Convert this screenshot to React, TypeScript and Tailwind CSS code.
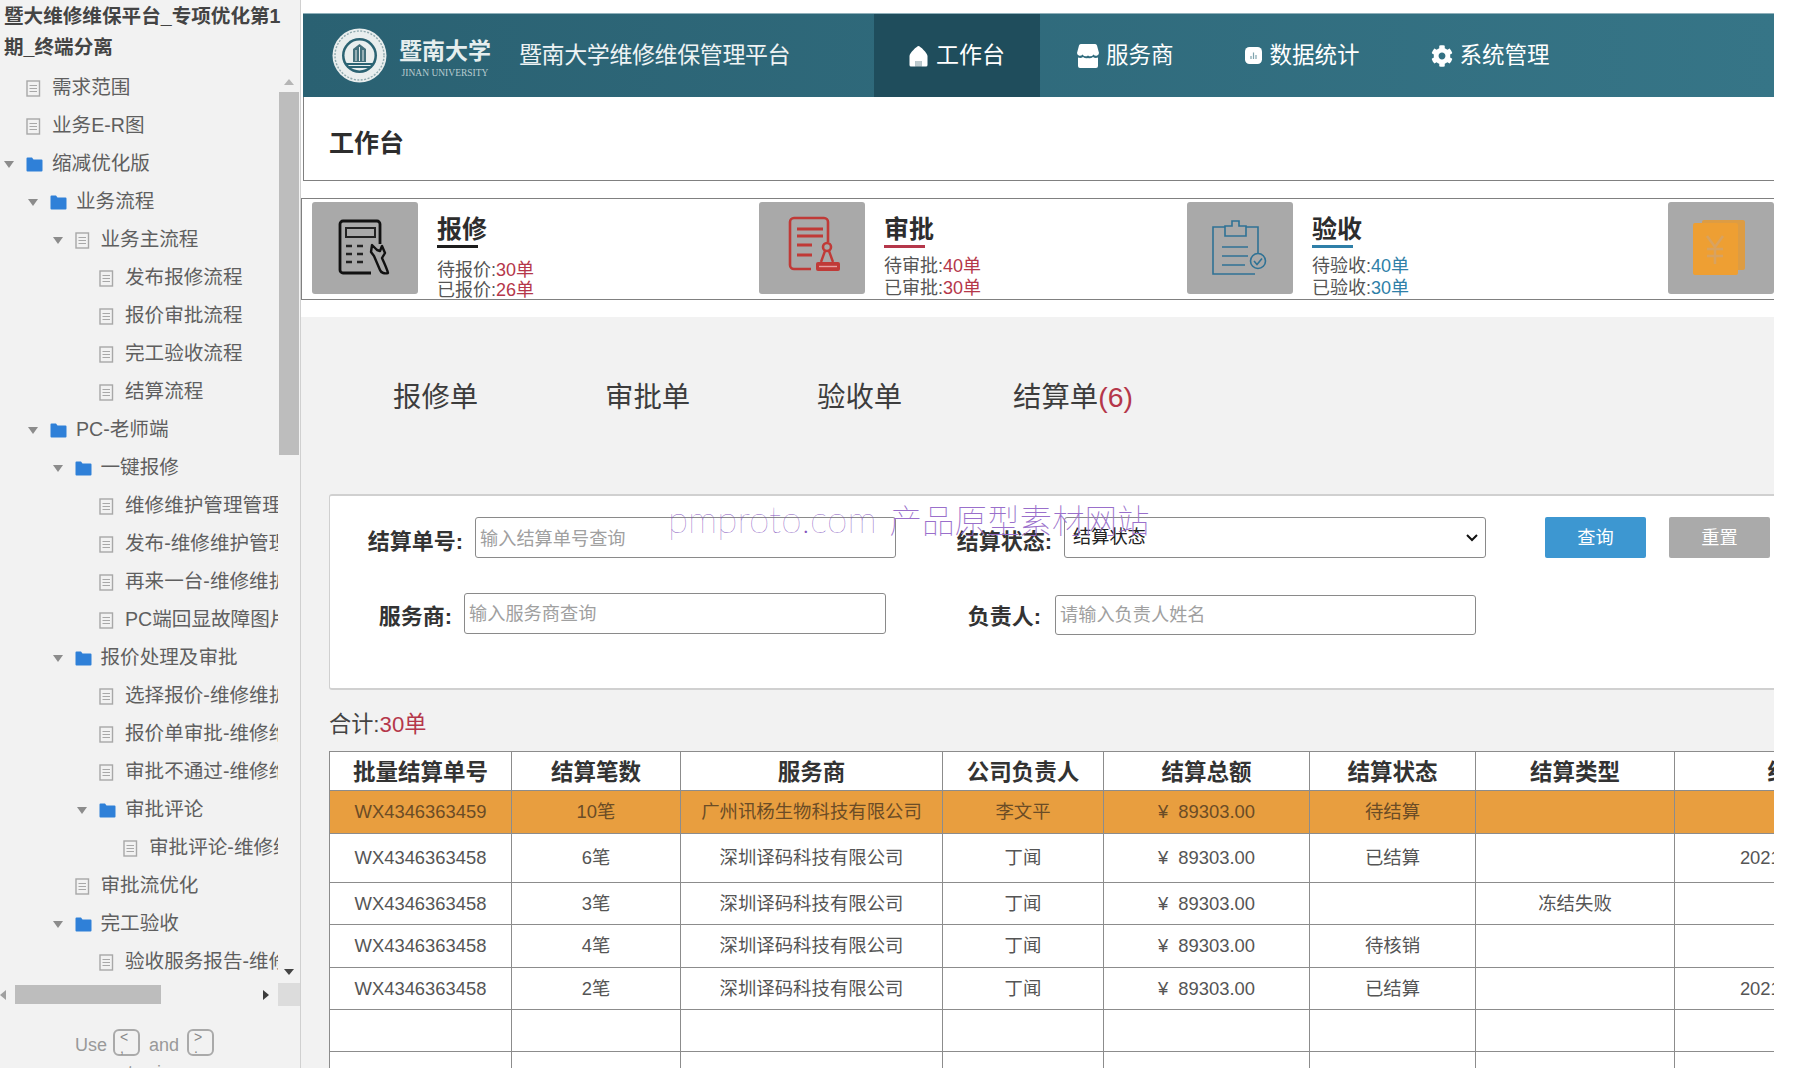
import React from "react";
import { FaCog } from "react-icons/fa";

type TreeRow = { level: number; kind: "doc" | "folder"; caret?: boolean; text: string };

const treeRows: TreeRow[] = [
  { level: 0, kind: "doc", text: "需求范围" },
  { level: 0, kind: "doc", text: "业务E-R图" },
  { level: 0, kind: "folder", caret: true, text: "缩减优化版" },
  { level: 1, kind: "folder", caret: true, text: "业务流程" },
  { level: 2, kind: "doc", caret: true, text: "业务主流程" },
  { level: 3, kind: "doc", text: "发布报修流程" },
  { level: 3, kind: "doc", text: "报价审批流程" },
  { level: 3, kind: "doc", text: "完工验收流程" },
  { level: 3, kind: "doc", text: "结算流程" },
  { level: 1, kind: "folder", caret: true, text: "PC-老师端" },
  { level: 2, kind: "folder", caret: true, text: "一键报修" },
  { level: 3, kind: "doc", text: "维修维护管理管理员" },
  { level: 3, kind: "doc", text: "发布-维修维护管理员" },
  { level: 3, kind: "doc", text: "再来一台-维修维护管理员" },
  { level: 3, kind: "doc", text: "PC端回显故障图片" },
  { level: 2, kind: "folder", caret: true, text: "报价处理及审批" },
  { level: 3, kind: "doc", text: "选择报价-维修维护管理员" },
  { level: 3, kind: "doc", text: "报价单审批-维修维护管理员" },
  { level: 3, kind: "doc", text: "审批不通过-维修维护管理员" },
  { level: 3, kind: "folder", caret: true, text: "审批评论" },
  { level: 4, kind: "doc", text: "审批评论-维修维护管理员" },
  { level: 2, kind: "doc", text: "审批流优化" },
  { level: 2, kind: "folder", caret: true, text: "完工验收" },
  { level: 3, kind: "doc", text: "验收服务报告-维修维护" },
];

const indent = ["pl-[6px]", "pl-[30px]", "pl-[54.5px]", "pl-[79px]", "pl-[103px]"];

function DocIcon() {
  return (
    <svg width="15" height="17" viewBox="0 0 15 17">
      <rect x="1" y="1" width="12.5" height="15" fill="none" stroke="#a8a8a8" strokeWidth="1.4" />
      <path d="M3.5 5.5h7.5M3.5 8.5h7.5M3.5 11.5h7.5" stroke="#a8a8a8" strokeWidth="1.2" />
    </svg>
  );
}

function FolderIcon() {
  return (
    <svg width="17" height="15" viewBox="0 0 17 15">
      <path d="M0.5 1.5a1 1 0 0 1 1-1h4.5l1.5 2h8a1 1 0 0 1 1 1v10a1 1 0 0 1-1 1h-14a1 1 0 0 1-1-1z" fill="#2f80d8" />
    </svg>
  );
}

function Caret() {
  return (
    <svg width="10" height="7" viewBox="0 0 10 7" className="-ml-[2px]">
      <path d="M0 0h10L5 7z" fill="#8c8c8c" />
    </svg>
  );
}

function Sidebar() {
  return (
    <aside className="w-[301px] h-full shrink-0 bg-[#f2f2f2] border-r border-[#d0d0d0] flex flex-col overflow-hidden">
      <div className="pl-[4px] pt-[1px] pr-[8px] mb-[7px] text-[19.6px] leading-[30.5px] font-bold text-[#444]">
        暨大维修维保平台_专项优化第1期_终端分离
      </div>
      <div className="flex h-[910px] shrink-0">
        <div className="w-[278px] shrink-0 overflow-hidden">
          {treeRows.map((row, i) => (
            <div key={i} className={`flex items-center h-[38px] whitespace-nowrap text-[19.6px] text-[#5f5f5f] ${indent[row.level]}`}>
              <span className="w-[20px] shrink-0 flex items-center">{row.caret ? <Caret /> : null}</span>
              <span className="w-[26px] shrink-0 flex items-center">{row.kind === "doc" ? <DocIcon /> : <FolderIcon />}</span>
              <span>{row.text}</span>
            </div>
          ))}
        </div>
        <div className="w-[20px] ml-[1px] shrink-0 flex flex-col">
          <div className="h-[23px] flex items-end justify-center pb-[7px]">
            <svg width="10" height="6" viewBox="0 0 10 6"><path d="M5 0l5 6H0z" fill="#b5b5b5" /></svg>
          </div>
          <div className="h-[363px] bg-[#bdbdbd]" />
          <div className="flex-1 flex items-end justify-center pb-[4px]">
            <svg width="10" height="6" viewBox="0 0 10 6"><path d="M0 0h10L5 6z" fill="#444" /></svg>
          </div>
        </div>
      </div>
      <div className="mt-[4px] h-[23px] shrink-0 flex items-center">
        <svg width="6" height="10" viewBox="0 0 6 10"><path d="M6 0v10L0 5z" fill="#a0a0a0" /></svg>
        <div className="ml-[9px] w-[146px] h-[19px] bg-[#bdbdbd]" />
        <svg width="6" height="10" viewBox="0 0 6 10" className="ml-[102px]"><path d="M0 0v10l6-5z" fill="#3c3c3c" /></svg>
        <div className="ml-[9px] w-[22px] h-[23px] bg-[#dcdcdc]" />
      </div>
      <div className="mt-[22px] h-[28px] shrink-0 flex items-center pl-[75px] text-[18px] text-[#999]">
        <span className="pt-[6px]">Use</span>
        <span className="ml-[6px] w-[27px] h-[27px] border-2 border-[#aaa] rounded-[6px] flex flex-col pl-[5px] pt-[1px] text-[14px] leading-[11px] text-[#888]">
          <span>&lt;</span>
          <span>,</span>
        </span>
        <span className="ml-[9px] pt-[6px]">and</span>
        <span className="ml-[8px] w-[27px] h-[27px] border-2 border-[#aaa] rounded-[6px] flex flex-col pl-[5px] pt-[1px] text-[14px] leading-[11px] text-[#888]">
          <span>&gt;</span>
          <span>.</span>
        </span>
      </div>
      <div className="pl-[128px] mt-[4px] text-[18px] leading-[24px] text-[#999]">to view</div>
    </aside>
  );
}

function Logo() {
  return (
    <svg width="55" height="55" viewBox="0 0 55 55" className="shrink-0">
      <circle cx="27.5" cy="27.5" r="27" fill="#e9eeee" />
      <circle cx="27.5" cy="27.5" r="24.5" fill="none" stroke="#8fa9ae" strokeWidth="1.4" strokeDasharray="2 1.5" />
      <circle cx="27.5" cy="27.5" r="17.5" fill="#2b6373" />
      <circle cx="27.5" cy="27.5" r="15" fill="#e9eeee" />
      <path d="M21 34V21l6.500-5 6.500 5v13z" fill="#44707c" />
      <path d="M14 36h27M17 39h21" stroke="#2b6373" strokeWidth="2.2" />
      <path d="M24 33V22M27.500 33V19M31 33V22" stroke="#e9eeee" strokeWidth="1" />
    </svg>
  );
}

function HomeIcon() {
  return (
    <svg width="19" height="22" viewBox="0 0 19 22" className="shrink-0">
      <path d="M9.500 1C11 1 18.500 8 18.500 11V20a1.500 1.500 0 0 1-1.500 1.500H12.500V16h-6v5.500H2A1.500 1.500 0 0 1 .5 20V11C.5 8 8 1 9.500 1z" fill="#fff" />
      <rect x="6.500" y="16" width="6" height="5.500" fill="#fff" opacity="0.7" />
    </svg>
  );
}

function StoreIcon() {
  return (
    <svg width="22" height="24" viewBox="0 0 22 24" className="shrink-0">
      <path d="M4 0h14a2 2 0 0 1 2 1.600L22 9a3 3 0 0 1-5.500 1.400A4 4 0 0 1 11 11.500a4 4 0 0 1-5.500-1.100A3 3 0 0 1 0 9l2-7.400A2 2 0 0 1 4 0z" fill="#fff" />
      <path d="M1 13.500a5 5 0 0 0 5-.5 6 6 0 0 0 5 1 6 6 0 0 0 5-1 5 5 0 0 0 5 .5V22a2 2 0 0 1-2 2H3a2 2 0 0 1-2-2z" fill="#fff" />
    </svg>
  );
}

function StatsIcon() {
  return (
    <svg width="17" height="17" viewBox="0 0 17 17" className="shrink-0">
      <rect width="17" height="17" rx="4.500" fill="#fff" />
      <path d="M6 12V9M8.500 12V5.500M11 12V8" stroke="#7fa4ae" strokeWidth="1.200" />
    </svg>
  );
}

function CalcIcon() {
  return (
    <svg viewBox="0 0 106 92" className="w-full h-full">
      <path d="M68 42V22a3 3 0 0 0-3-3H31a3 3 0 0 0-3 3v46a3 3 0 0 0 3 3h28" fill="none" stroke="#111" strokeWidth="2.800" />
      <rect x="34" y="26" width="29" height="9" fill="none" stroke="#222" strokeWidth="2" />
      <path d="M34 44h6M45 44h6M34 52h6M45 52h6M34 60h6M45 60h6" stroke="#222" strokeWidth="2.600" />
      <path d="M60 43l-1 7 3 4 6 14c1 3 5 4 8 3-1-4-3-8-6-15l3-5-3-7-2 5-3-1z" fill="#a9a9a9" stroke="#111" strokeWidth="2.400" strokeLinejoin="round" />
    </svg>
  );
}

function StampDocIcon() {
  return (
    <svg viewBox="0 0 106 92" className="w-full h-full">
      <path d="M52 67H35a4 4 0 0 1-4-4V20a4 4 0 0 1 4-4h30a4 4 0 0 1 4 4v20" fill="none" stroke="#c03a37" strokeWidth="2.600" />
      <path d="M38 27h26M38 34h26M38 43h15M38 53h15" stroke="#c03a37" strokeWidth="3" />
      <circle cx="68" cy="45" r="4" fill="none" stroke="#c03a37" strokeWidth="2.600" />
      <path d="M66 49l-4 11M70 49l4 11" stroke="#c03a37" strokeWidth="2.400" />
      <rect x="57" y="60" width="24" height="9" rx="2" fill="#c03a37" />
      <path d="M60 64.500h18" stroke="#e8a0a0" strokeWidth="1.400" />
    </svg>
  );
}

function ClipIcon() {
  return (
    <svg viewBox="0 0 106 92" className="w-full h-full">
      <path d="M71 52V25H59M38 25H26v47h42" fill="none" stroke="#2f7295" strokeWidth="1.600" />
      <path d="M38 34V24h7v-5h7v5h7v10z" fill="none" stroke="#2f7295" strokeWidth="1.600" />
      <path d="M35 45h26M35 54h26M35 63h23" stroke="#2f7295" strokeWidth="1.600" />
      <circle cx="71" cy="59" r="7.500" fill="none" stroke="#2f7295" strokeWidth="1.600" />
      <path d="M67 59l3 3.500 5-6" fill="none" stroke="#2f7295" strokeWidth="1.600" />
    </svg>
  );
}

function YenIcon() {
  return (
    <svg viewBox="0 0 106 92" className="w-full h-full">
      <rect x="34" y="18" width="43" height="50" rx="2" fill="#dd9c43" />
      <rect x="25" y="21" width="45" height="52" rx="2" fill="#ee9f33" />
      <path d="M39 34l8 11 8-11M47 45v17M39 47h16M39 54h16" fill="none" stroke="#d8a260" strokeWidth="2.500" />
    </svg>
  );
}

function Card({
  w,
  title,
  icon,
  bar,
  accent,
  l1,
  v1,
  l2,
  v2,
  lines,
}: {
  w: string;
  title: string;
  icon: React.ReactNode;
  bar: string;
  accent: string;
  l1: string;
  v1: string;
  l2: string;
  v2: string;
  lines: string;
}) {
  return (
    <div className={`flex shrink-0 ${w}`}>
      <div className="w-[106px] h-[92px] shrink-0 bg-[#a9a9a9] rounded-[3px]">{icon}</div>
      <div className="ml-[19px] pt-[12px]">
        <div className="text-[25px] leading-[30px] font-bold text-[#2d2d2d]">{title}</div>
        <div className={`w-[41px] h-[3px] mt-[1px] ${bar}`} />
        <div className={`text-[18px] text-[#555] ${lines}`}>
          <div>
            {l1}:<span className={accent}>{v1}</span>
          </div>
          <div>
            {l2}:<span className={accent}>{v2}</span>
          </div>
        </div>
      </div>
    </div>
  );
}

const cols = ["w-[182px]", "w-[169px]", "w-[262px]", "w-[161px]", "w-[206px]", "w-[166px]", "w-[199px]", "w-[276px]"];
const heads = ["批量结算单号", "结算笔数", "服务商", "公司负责人", "结算总额", "结算状态", "结算类型", "结算时间"];
const yen = "¥\u00a0\u00a089303.00";
const rows = [
  { h: "h-[43px]", hi: true, c: ["WX4346363459", "10笔", "广州讯杨生物科技有限公司", "李文平", yen, "待结算", "", ""] },
  { h: "h-[49px]", hi: false, c: ["WX4346363458", "6笔", "深圳译码科技有限公司", "丁闻", yen, "已结算", "", "2021-12-22 10:30"] },
  { h: "h-[42px]", hi: false, c: ["WX4346363458", "3笔", "深圳译码科技有限公司", "丁闻", yen, "", "冻结失败", ""] },
  { h: "h-[43px]", hi: false, c: ["WX4346363458", "4笔", "深圳译码科技有限公司", "丁闻", yen, "待核销", "", ""] },
  { h: "h-[42px]", hi: false, c: ["WX4346363458", "2笔", "深圳译码科技有限公司", "丁闻", yen, "已结算", "", "2021-12-22 10:30"] },
  { h: "h-[42px]", hi: false, c: ["", "", "", "", "", "", "", ""] },
  { h: "h-[42px]", hi: false, c: ["", "", "", "", "", "", "", ""] },
];

export default function App() {
  return (
    <div className="w-[1808px] h-[1068px] flex overflow-hidden bg-white relative font-['Liberation_Sans','Noto_Sans_CJK_SC',sans-serif]">
      <Sidebar />
      <main className="w-[1473px] h-full shrink-0 overflow-hidden flex flex-col pt-[13px]">
        <header className="ml-[2px] h-[84px] shrink-0 flex items-center bg-linear-to-r from-[#2a6172] to-[#367587] text-white border-t border-[#8fb0ba]">
          <div className="ml-[29px]">
            <Logo />
          </div>
          <div className="ml-[12px] w-[92px] pt-[6px] flex flex-col items-center shrink-0">
            <div className="text-[23px] leading-[26px] font-bold text-[#e6eeee] whitespace-nowrap">暨南大学</div>
            <div className="text-[9.5px] leading-[12px] mt-[3px] text-[#b9ccd0] font-['Liberation_Serif',serif] whitespace-nowrap">JINAN UNIVERSITY</div>
          </div>
          <div className="ml-[28px] w-[271px] shrink-0 text-[23px] tracking-[-0.4px] text-[#eef3f4] whitespace-nowrap">暨南大学维修维保管理平台</div>
          <div className="ml-[84px] w-[166px] h-full shrink-0 flex items-center justify-center gap-[8px] bg-[#1f4d5c] text-[23px]">
            <HomeIcon />
            <span>工作台</span>
          </div>
          <div className="ml-[37px] shrink-0 flex items-center gap-[7px] text-[22.5px]">
            <StoreIcon />
            <span>服务商</span>
          </div>
          <div className="ml-[71px] shrink-0 flex items-center gap-[8px] text-[22.5px]">
            <StatsIcon />
            <span>数据统计</span>
          </div>
          <div className="ml-[71px] shrink-0 flex items-center gap-[7px] text-[22.5px]">
            <FaCog className="w-[22px] h-[22px]" />
            <span>系统管理</span>
          </div>
        </header>

        <div className="ml-[2px] h-[84px] shrink-0 flex items-center pl-[25px] pt-[10px] border-l border-b border-[#808080]">
          <h1 className="text-[25px] font-bold text-[#2d2d2d]">工作台</h1>
        </div>

        <section className="mt-[17px] h-[102px] shrink-0 flex pl-[10px] pt-[3px] border-t border-b border-l border-[#808080] overflow-hidden">
          <Card w="w-[447px]" title="报修" icon={<CalcIcon />} bar="bg-[#1d1d1d]" accent="text-[#b5374a]" l1="待报价" v1="30单" l2="已报价" v2="26单" lines="mt-[12px] leading-[20px]" />
          <Card w="w-[428px]" title="审批" icon={<StampDocIcon />} bar="bg-[#b5374a]" accent="text-[#b5374a]" l1="待审批" v1="40单" l2="已审批" v2="30单" lines="mt-[7px] leading-[22px]" />
          <Card w="w-[481px]" title="验收" icon={<ClipIcon />} bar="bg-[#2f7fa8]" accent="text-[#2f7fa8]" l1="待验收" v1="40单" l2="已验收" v2="30单" lines="mt-[7px] leading-[22px]" />
          <div className="w-[106px] h-[92px] shrink-0 bg-[#a9a9a9] rounded-[3px]">
            <YenIcon />
          </div>
        </section>

        <div className="mt-[17px] flex-1 bg-[#f2f2f2] min-h-0 overflow-hidden">
          <nav className="pt-[60px] pl-[92px] flex text-[28.4px] leading-[40px] text-[#3d3d3d]">
            <div className="w-[212px] shrink-0">报修单</div>
            <div className="w-[212px] shrink-0">审批单</div>
            <div className="w-[196px] shrink-0">验收单</div>
            <div className="shrink-0">
              结算单<span className="text-[#b5374a]">(6)</span>
            </div>
          </nav>

          <div className="mt-[77px] ml-[28px] h-[196px] bg-white border-t-2 border-b-2 border-l border-[#d0d0d0] rounded-l-[3px] pt-[21px]">
            <div className="flex items-start">
              <label className="w-[133px] mt-[5px] text-right text-[22px] leading-[40px] font-bold text-[#333]">结算单号:</label>
              <input placeholder="输入结算单号查询" className="ml-[12px] w-[421px] h-[41px] pl-[4px] pt-[3px] border border-[#8a8a8a] rounded-[3px] text-[18.2px] bg-white placeholder:text-[#a0a0a0]" />
              <label className="w-[156px] mt-[5px] text-right text-[22px] leading-[40px] font-bold text-[#333]">结算状态:</label>
              <div className="relative ml-[12px] w-[422px] h-[41px]">
                <select defaultValue="结算状态" className="appearance-none w-full h-full pl-[8px] border border-[#8a8a8a] rounded-[3px] text-[18.2px] text-[#222] bg-white">
                  <option>结算状态</option>
                </select>
                <svg width="12" height="8" viewBox="0 0 12 8" className="absolute right-[8px] top-[17px]">
                  <path d="M1 1l5 5 5-5" fill="none" stroke="#111" strokeWidth="2" />
                </svg>
              </div>
              <button className="ml-[59px] w-[101px] h-[41px] pt-[3px] rounded-[2px] bg-[#3d97d1] text-white text-[18.2px]">查询</button>
              <button className="ml-[23px] w-[101px] h-[41px] pt-[3px] rounded-[2px] bg-[#aaaaaa] text-white text-[18.2px]">重置</button>
            </div>
            <div className="flex items-start mt-[31px]">
              <label className="w-[122px] mt-[4px] text-right text-[22px] leading-[40px] font-bold text-[#333]">服务商:</label>
              <input placeholder="输入服务商查询" className="ml-[12px] w-[422px] h-[41px] pl-[4px] pt-[2px] border border-[#8a8a8a] rounded-[3px] text-[18.2px] bg-white placeholder:text-[#a0a0a0]" />
              <label className="w-[155px] mt-[4px] text-right text-[22px] leading-[40px] font-bold text-[#333]">负责人:</label>
              <input placeholder="请输入负责人姓名" className="ml-[14px] mt-[2px] w-[421px] h-[40px] pl-[4px] pt-[1px] border border-[#8a8a8a] rounded-[3px] text-[18.2px] bg-white placeholder:text-[#a0a0a0]" />
            </div>
          </div>

          <div className="mt-[20px] ml-[28px] text-[22.2px] leading-[30px] text-[#444]">
            合计:<span className="text-[#b5374a]">30单</span>
          </div>

          <table className="mt-[11px] ml-[28px] w-[1621px] max-w-none table-fixed border-collapse bg-white text-center text-[18.4px] text-[#555]">
            <colgroup>
              {cols.map((c, i) => (
                <col key={i} className={c} />
              ))}
            </colgroup>
            <thead>
              <tr className="h-[39px]">
                {heads.map((h) => (
                  <th key={h} className="border border-[#8c8c8c] p-0 pt-[3px] leading-[30px] text-[22.5px] font-bold text-[#333]">
                    {h}
                  </th>
                ))}
              </tr>
            </thead>
            <tbody>
              {rows.map((r, i) => (
                <tr key={i} className={`${r.h} ${r.hi ? "bg-[#e89e3f] text-[#6b4c26]" : ""}`}>
                  {r.c.map((t, j) => (
                    <td key={j} className="border border-[#8c8c8c] p-0 whitespace-nowrap">
                      {t}
                    </td>
                  ))}
                </tr>
              ))}
            </tbody>
          </table>
        </div>
      </main>

      <div className="absolute left-[668px] top-[497px] flex items-baseline leading-[44px] text-[#9a6fcb] whitespace-nowrap pointer-events-none">
        <span className="text-[37px] font-['Lato',sans-serif] font-thin mr-[13px] text-[#8353bd]">pmproto.com</span>
        <span className="text-[32.5px] font-['Noto_Sans_CJK_SC',sans-serif] font-thin">产品原型素材网站</span>
      </div>
    </div>
  );
}
